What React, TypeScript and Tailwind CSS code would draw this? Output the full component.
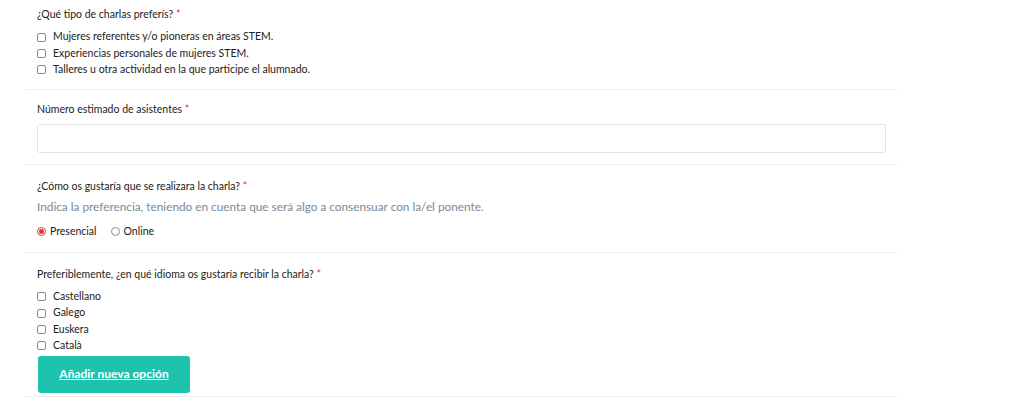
import React from "react";

function Box() {
  return <span className="inline-block w-[9px] h-[9px] border border-[#8a8a8a] rounded-[2px] bg-white shrink-0" />;
}

function CheckItem({ label }: { label: string }) {
  return (
    <div className="flex items-center gap-[7px] h-[16.3px]">
      <Box />
      <span className="text-[10.5px] text-[#222]">{label}</span>
    </div>
  );
}

function Label({ text }: { text: string }) {
  return (
    <div className="text-[10.5px] text-[#222] leading-[14px]">
      {text} <span className="text-[#e0343a]">*</span>
    </div>
  );
}

export default function App() {
  return (
    <div className="w-[1023px] h-[403px] bg-white font-['Lato',sans-serif] overflow-hidden">
      <div className="ml-[25px] w-[873px]">
        <section className="px-[12px] pt-[7px] pb-[11px] border-b border-[#eeeeee]">
          <Label text="¿Qué tipo de charlas preferís?" />
          <div className="mt-[8px]">
            <CheckItem label="Mujeres referentes y/o pioneras en áreas STEM." />
            <CheckItem label="Experiencias personales de mujeres STEM." />
            <CheckItem label="Talleres u otra actividad en la que participe el alumnado." />
          </div>
        </section>
        <section className="px-[12px] pt-[12px] pb-[11px] border-b border-[#eeeeee]">
          <Label text="Número estimado de asistentes" />
          <div className="mt-[8px] w-[849px] h-[29px] border border-[#dfe3e3] rounded-[3px]" />
        </section>
        <section className="px-[12px] pt-[14px] pb-[12px] border-b border-[#eeeeee]">
          <Label text="¿Cómo os gustaría que se realizara la charla?" />
          <div className="mt-[5px] text-[11.8px] text-[#7b8896] leading-[18px]">
            Indica la preferencia, teniendo en cuenta que será algo a consensuar con la/el ponente.
          </div>
          <div className="mt-[8px] flex items-center text-[10.5px] text-[#222]">
            <span className="w-[9px] h-[9px] rounded-full border border-[#e0343a] flex items-center justify-center">
              <span className="w-[5px] h-[5px] rounded-full bg-[#e0343a]" />
            </span>
            <span className="ml-[4px]">Presencial</span>
            <span className="ml-[14px] w-[9px] h-[9px] rounded-full border border-[#8a8a8a]" />
            <span className="ml-[4px]">Online</span>
          </div>
        </section>
        <section className="px-[12px] pt-[14px] pb-[3px] border-b border-[#eeeeee]">
          <Label text="Preferiblemente, ¿en qué idioma os gustaría recibir la charla?" />
          <div className="mt-[8px] h-[69px] overflow-hidden">
            <CheckItem label="Castellano" />
            <CheckItem label="Galego" />
            <CheckItem label="Euskera" />
            <CheckItem label="Català" />
            <CheckItem label="Aranés" />
          </div>
          <button className="relative -mt-[2px] ml-[1px] w-[152px] h-[37px] bg-[#1ec3ae] rounded-[3px] text-white text-[12px] font-bold underline">
            Añadir nueva opción
          </button>
        </section>
      </div>
    </div>
  );
}
